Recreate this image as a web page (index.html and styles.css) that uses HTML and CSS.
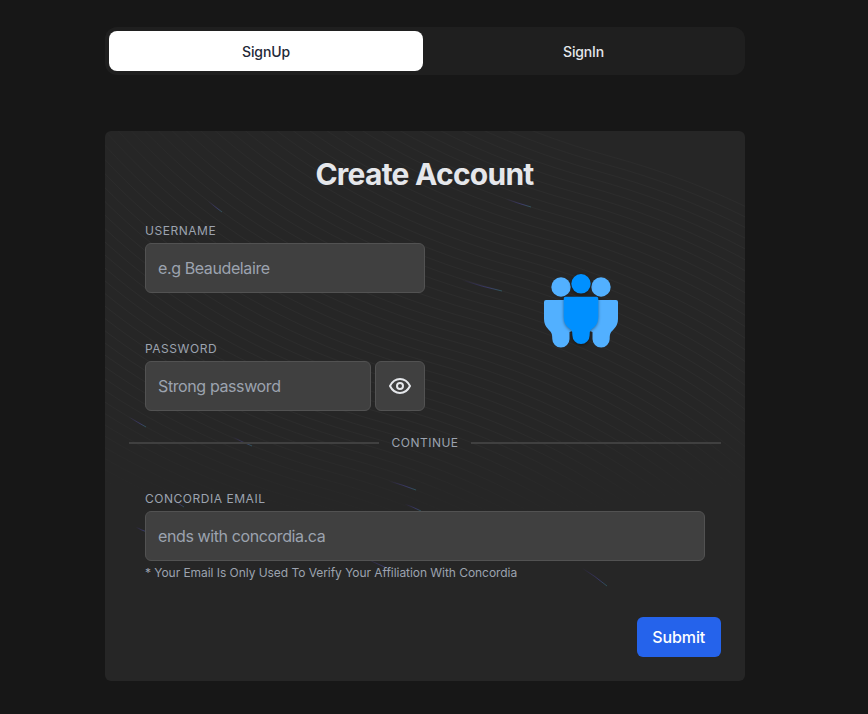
FILE: index.html
```html
<!DOCTYPE html>
<html lang="en">
<head>
<meta charset="utf-8">
<title>Create Account</title>
<link rel="stylesheet" href="styles.css">
</head>
<body>
<main class="page">
  <nav class="tabs">
    <button class="tab active" type="button">SignUp</button>
    <button class="tab" type="button">SignIn</button>
  </nav>
  <form class="card">
    <svg class="beams" viewBox="0 0 696 316" fill="none" aria-hidden="true">
      <defs>
        <radialGradient id="fade" cx="0" cy="0" r="1" gradientUnits="userSpaceOnUse" gradientTransform="translate(352 34) rotate(90) scale(555 1560.62)">
          <stop offset="0.0666667" stop-color="#d4d4d4"/>
          <stop offset="0.26" stop-color="#d4d4d4"/>
          <stop offset="0.45" stop-color="#fff" stop-opacity="0"/>
        </radialGradient>
      </defs>
      <path id="lines" stroke="url(#fade)" stroke-opacity="0.042" stroke-width="0.9"/>
    </svg>
    <svg class="beams" viewBox="0 0 640 550" fill="none" stroke-width="0.8" aria-hidden="true">
      <defs>
        <linearGradient id="beam" x1="0" y1="0" x2="1" y2="1">
          <stop offset="0" stop-color="#6344f5" stop-opacity="0"/>
          <stop offset="0.7" stop-color="#5558c8" stop-opacity="0.5"/>
          <stop offset="1" stop-color="#38a0b0" stop-opacity="0.45"/>
        </linearGradient>
      </defs>
      <g stroke="url(#beam)">
        <path d="M103 70Q110 76 117 81"/>
        <path d="M401 68Q412 72 426 76"/>
        <path d="M357 149Q378 156 397 160"/>
        <path d="M24 286Q32 291 41 296"/>
        <path d="M128 306Q137 311 147 315"/>
        <path d="M284 350Q298 354 311 359"/>
        <path d="M70 370Q74 373 79 376"/>
        <path d="M31 396Q36 399 42 401"/>
        <path d="M300 373Q308 376 316 380"/>
        <path d="M262 428Q273 433 286 439"/>
        <path d="M477 437Q490 445 502 455"/>
      </g>
    </svg>
    <h1>Create Account</h1>
    <div class="top">
      <div class="fields">
        <label class="label" for="user">USERNAME</label>
        <input class="input" id="user" type="text" placeholder="e.g Beaudelaire">
        <label class="label second" for="pass">PASSWORD</label>
        <div class="password">
          <input class="input" id="pass" type="password" placeholder="Strong password">
          <button class="eye" type="button" aria-label="Show password">
            <svg width="24" height="24" viewBox="0 0 24 24" fill="none" stroke="#e5e7eb" stroke-width="2" stroke-linejoin="round">
              <path d="M2 12C4.400 7.200 8 5 12 5s7.600 2.200 10 7C19.600 16.800 16 19 12 19S4.400 16.800 2 12Z"/>
              <circle cx="12" cy="12" r="3"/>
            </svg>
          </button>
        </div>
      </div>
      <div class="picture">
        <svg class="people" width="80" height="80" viewBox="0 0 80 80">
          <g fill="#52b0ff">
            <circle cx="20" cy="13" r="9.700"/>
            <circle cx="60" cy="13" r="9.700"/>
            <path d="M5 26H37V55L28.500 58V65a8.600 8.600 0 0 1-17.200 0C11.300 59 10 58 7.500 55.500Q3 51 3 45V28Q3 26 5 26Z"/>
            <path d="M75 26H43V55L51.500 58V65a8.600 8.600 0 0 0 17.200 0C68.700 59 70 58 72.500 55.500Q77 51 77 45V28Q77 26 75 26Z"/>
          </g>
          <g class="front" fill="#0090ff">
            <circle cx="40" cy="9.800" r="9.700"/>
            <path d="M24.500 22.800H55.500Q57.300 22.800 57.300 24.800V42C57.300 50 54 53 50 55.500Q48.600 57 48.600 61.500a8.600 8.600 0 0 1-17.200 0Q31.400 57 30 55.500C26 53 22.700 50 22.700 42V24.800Q22.700 22.800 24.500 22.800Z"/>
          </g>
        </svg>
      </div>
    </div>
    <div class="divider"><span>CONTINUE</span></div>
    <div class="email">
      <label class="label" for="email">CONCORDIA EMAIL</label>
      <input class="input" id="email" type="text" placeholder="ends with concordia.ca">
      <p class="hint">* Your Email Is Only Used To Verify Your Affiliation With Concordia</p>
    </div>
    <div class="actions"><button class="submit" type="button">Submit</button></div>
  </form>
</main>
<script src="beams.js"></script>
</body>
</html>
```
FILE: styles.css
```css
* { box-sizing: border-box; }
body {
  margin: 0;
  background: #171717;
  color: #e5e7eb;
  font-family: Inter, "Liberation Sans", sans-serif;
}
button, input { font: inherit; color: inherit; margin: 0; }
.page {
  width: 640px;
  margin-left: 105px;
  padding-top: 27px;
}
.tabs {
  display: flex;
  height: 48px;
  padding: 4px;
  border-radius: 12px;
  background: #1f1f1f;
}
.tab {
  flex: 1;
  border: 0;
  padding: 0 0 0 3px;
  border-radius: 8px;
  background: transparent;
  font-size: 14px;
  font-weight: 500;
  letter-spacing: -0.15px;
}
.tab.active {
  flex: 0 0 314px;
  padding-left: 0;
  background: #fff;
  color: #1f2937;
}
.card {
  position: relative;
  height: 550px;
  margin-top: 56px;
  padding: 24px;
  border-radius: 6px;
  background: #262626;
  overflow: hidden;
}
.card > * { position: relative; }
.card > .beams {
  position: absolute;
  inset: 0;
  width: 100%;
  height: 100%;
}
h1 {
  margin: 0;
  height: 36px;
  padding-right: 1px;
  font-size: 30px;
  line-height: 38px;
  font-weight: 700;
  letter-spacing: -0.75px;
  text-align: center;
}
.top { display: flex; padding: 32px 16px 0; }
.fields { width: 280px; }
.label {
  display: block;
  height: 16px;
  margin-bottom: 4px;
  font-size: 12px;
  line-height: 16px;
  letter-spacing: .53px;
  color: #9ca3af;
}
.label.second { margin-top: 48px; }
.input {
  display: block;
  width: 100%;
  height: 50px;
  padding: 0 12px;
  border: 1px solid #525252;
  border-radius: 6px;
  background: #404040;
  font-size: 16px;
  letter-spacing: -0.39px;
}
.input::placeholder { color: #9ca3af; opacity: 1; }
.password { display: flex; gap: 4px; }
.eye {
  display: flex;
  flex: 0 0 50px;
  align-items: center;
  justify-content: center;
  padding: 0;
  border: 1px solid #525252;
  border-radius: 6px;
  background: #404040;
}
.picture { flex: 1; padding: 51px 0 0 115.600px; }
.people { display: block; overflow: visible; }
.front { filter: drop-shadow(0 1px 1.500px rgba(0, 0, 0, .4)); }
.divider {
  display: flex;
  align-items: center;
  gap: 12px;
  height: 16px;
  margin-top: 24px;
  font-size: 12px;
  line-height: 14px;
  letter-spacing: .5px;
  color: #9ca3af;
}
.divider::before, .divider::after {
  content: "";
  flex: 1;
  height: 2px;
  background: #404040;
}
.email { padding: 40px 16px 0; }
.hint {
  margin: 4px 0 0;
  font-size: 12px;
  line-height: 16px;
  letter-spacing: -0.05px;
  color: #9ca3af;
}
.actions { display: flex; justify-content: flex-end; margin-top: 36px; }
.submit {
  width: 84.500px;
  height: 40px;
  padding: 0;
  border: 0;
  border-radius: 6px;
  background: #2563eb;
  color: #fff;
  font-weight: 500;
  letter-spacing: -0.1px;
}
```
FILE: beams.js
```js
const parts = [];
for (let i = 0; i < 58; i++) {
  const x = 7 * i, y = -8 * i;
  parts.push(`M${-380 + x} ${-189 + y}C${-380 + x} ${-189 + y} ${-312 + x} ${216 + y} ${152 + x} ${343 + y}C${616 + x} ${470 + y} ${684 + x} ${875 + y} ${684 + x} ${875 + y}`);
}
document.getElementById("lines").setAttribute("d", parts.join(""));
```
